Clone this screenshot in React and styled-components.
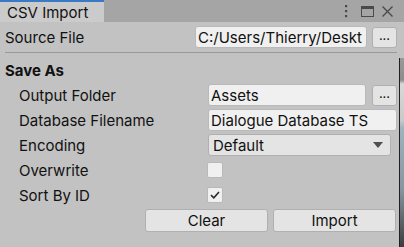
import React from "react";
import styled, { createGlobalStyle } from "styled-components";

const GlobalStyle = createGlobalStyle`
  html, body {
    margin: 0;
    padding: 0;
    background: #c2c2c2;
  }
  #root {
    width: 404px;
    height: 247px;
    overflow: hidden;
  }
`;

const Window = styled.div`
  position: relative;
  width: 404px;
  height: 247px;
  display: flex;
  flex-direction: column;
  background: #c2c2c2;
  font-family: Inter, "Noto Sans", sans-serif;
  font-size: 15px;
  color: #111111;
  overflow: hidden;
`;

const TabBar = styled.div`
  height: 22px;
  flex: none;
  display: flex;
  align-items: stretch;
  background: #a5a5a5;
`;

const Tab = styled.div`
  width: 104px;
  box-sizing: border-box;
  border-top: 2px solid #3a79c4;
  background: #cbcbcb;
  padding-left: 7px;
  display: flex;
  align-items: center;
  line-height: 1;
`;

const TabTools = styled.div`
  margin-left: auto;
  display: flex;
  align-items: center;
  padding-right: 11px;
  color: #4a4a4a;
`;

const ToolIcon = styled.span`
  display: flex;
  margin-left: ${(p) => p.$gap}px;
`;

const Row = styled.div`
  height: 22px;
  flex: none;
  display: flex;
  align-items: center;
  padding-left: ${(p) => (p.$indent ? 19 : 5)}px;
  padding-right: 7px;
  margin-top: ${(p) => p.$top ?? 3}px;
`;

const Label = styled.div`
  width: ${(p) => (p.$indent ? 189 : 190)}px;
  flex: none;
  white-space: nowrap;
`;

const Header = styled.div`
  font-weight: 700;
`;

const Field = styled.div`
  height: 22px;
  box-sizing: border-box;
  flex: ${(p) => (p.$grow ? 1 : "none")};
  width: ${(p) => (p.$width ? `${p.$width}px` : "auto")};
  background: #f0f0f0;
  border: 1px solid #b9b9b9;
  border-radius: 3px;
  padding: 0 2px;
  display: flex;
  align-items: center;
  white-space: nowrap;
  overflow: hidden;
`;

const SmallButton = styled.div`
  width: 25px;
  height: 21px;
  flex: none;
  box-sizing: border-box;
  margin-left: ${(p) => p.$gap}px;
  background: #e4e4e4;
  border: 1px solid #b0b0b0;
  border-radius: 3px;
  display: flex;
  align-items: flex-end;
  justify-content: center;
  padding-bottom: 5px;
  font-size: 13px;
  line-height: 1;
`;

const Dropdown = styled.div`
  width: 183px;
  height: 22px;
  box-sizing: border-box;
  background: #e4e4e4;
  border: 1px solid #b0b0b0;
  border-radius: 3px;
  padding: 0 7px 0 4px;
  display: flex;
  align-items: center;
  justify-content: space-between;
`;

const Arrow = styled.span`
  width: 0;
  height: 0;
  border-left: 5px solid transparent;
  border-right: 5px solid transparent;
  border-top: 6px solid #4f4f4f;
`;

const Checkbox = styled.div`
  width: 16px;
  height: 16px;
  box-sizing: border-box;
  margin-left: -1px;
  background: #f0f0f0;
  border: 1px solid #b9b9b9;
  border-radius: 2px;
  display: flex;
  align-items: center;
  justify-content: center;
`;

const Separator = styled.div`
  height: 1px;
  flex: none;
  margin: 4px 7px 6px 5px;
  background: #999999;
`;

const ButtonRow = styled.div`
  height: 23px;
  flex: none;
  margin-top: 3px;
  display: flex;
  justify-content: flex-end;
  gap: 5px;
  padding-right: 8px;
`;

const Button = styled.div`
  width: 123px;
  box-sizing: border-box;
  background: #e4e4e4;
  border: 1px solid #b0b0b0;
  border-radius: 3px;
  display: flex;
  align-items: center;
  justify-content: center;
`;

const EdgeStrip = styled.div`
  position: absolute;
  top: 58px;
  right: 0;
  bottom: 0;
  width: 4px;
  border-left: 1px solid #202020;
  background: linear-gradient(
    to bottom,
    #9a9a9a 0px,
    #8c8c8c 22px,
    #d8d8d8 26px,
    #c9c9c9 62px,
    #9fb2bf 70px,
    #8797a2 130px,
    #3c3c3c 189px
  );
`;

function Kebab() {
  return (
    <svg width="4" height="14" viewBox="0 0 4 14">
      <rect x="1" y="1" width="2.2" height="2.2" fill="currentColor" />
      <rect x="1" y="6" width="2.2" height="2.2" fill="currentColor" />
      <rect x="1" y="11" width="2.2" height="2.2" fill="currentColor" />
    </svg>
  );
}

function Maximize() {
  return (
    <svg width="13" height="11" viewBox="0 0 13 11">
      <rect x="0.5" y="0.5" width="12" height="10" fill="none" stroke="currentColor" />
      <rect x="0.5" y="0.5" width="12" height="2.5" fill="currentColor" />
    </svg>
  );
}

function Close() {
  return (
    <svg width="11" height="11" viewBox="0 0 11 11">
      <path d="M0.5 0.5 L10.5 10.5 M10.5 0.5 L0.5 10.5" stroke="currentColor" strokeWidth="1.4" />
    </svg>
  );
}

function Check() {
  return (
    <svg width="10" height="8" viewBox="0 0 10 8">
      <path d="M1 4.2 L3.8 6.8 L9 1" fill="none" stroke="#2b2b2b" strokeWidth="1.6" />
    </svg>
  );
}

export default function App() {
  return (
    <Window>
      <GlobalStyle />
      <TabBar>
        <Tab>CSV Import</Tab>
        <TabTools>
          <ToolIcon $gap={0}>
            <Kebab />
          </ToolIcon>
          <ToolIcon $gap={13}>
            <Maximize />
          </ToolIcon>
          <ToolIcon $gap={8}>
            <Close />
          </ToolIcon>
        </TabTools>
      </TabBar>

      <Row $top={4}>
        <Label>Source File</Label>
        <Field $width={172}>C:/Users/Thierry/Deskt</Field>
        <SmallButton $gap={5}>...</SmallButton>
      </Row>
      <Separator />

      <Row $top={0}>
        <Header>Save As</Header>
      </Row>
      <Row $indent>
        <Label $indent>Output Folder</Label>
        <Field $width={158}>Assets</Field>
        <SmallButton $gap={6}>...</SmallButton>
      </Row>
      <Row $indent>
        <Label $indent>Database Filename</Label>
        <Field $grow>Dialogue Database TS</Field>
      </Row>
      <Row $indent>
        <Label $indent>Encoding</Label>
        <Dropdown>
          Default
          <Arrow />
        </Dropdown>
      </Row>
      <Row $indent>
        <Label $indent>Overwrite</Label>
        <Checkbox />
      </Row>
      <Row $indent>
        <Label $indent>Sort By ID</Label>
        <Checkbox>
          <Check />
        </Checkbox>
      </Row>
      <ButtonRow>
        <Button>Clear</Button>
        <Button>Import</Button>
      </ButtonRow>

      <EdgeStrip />
    </Window>
  );
}
